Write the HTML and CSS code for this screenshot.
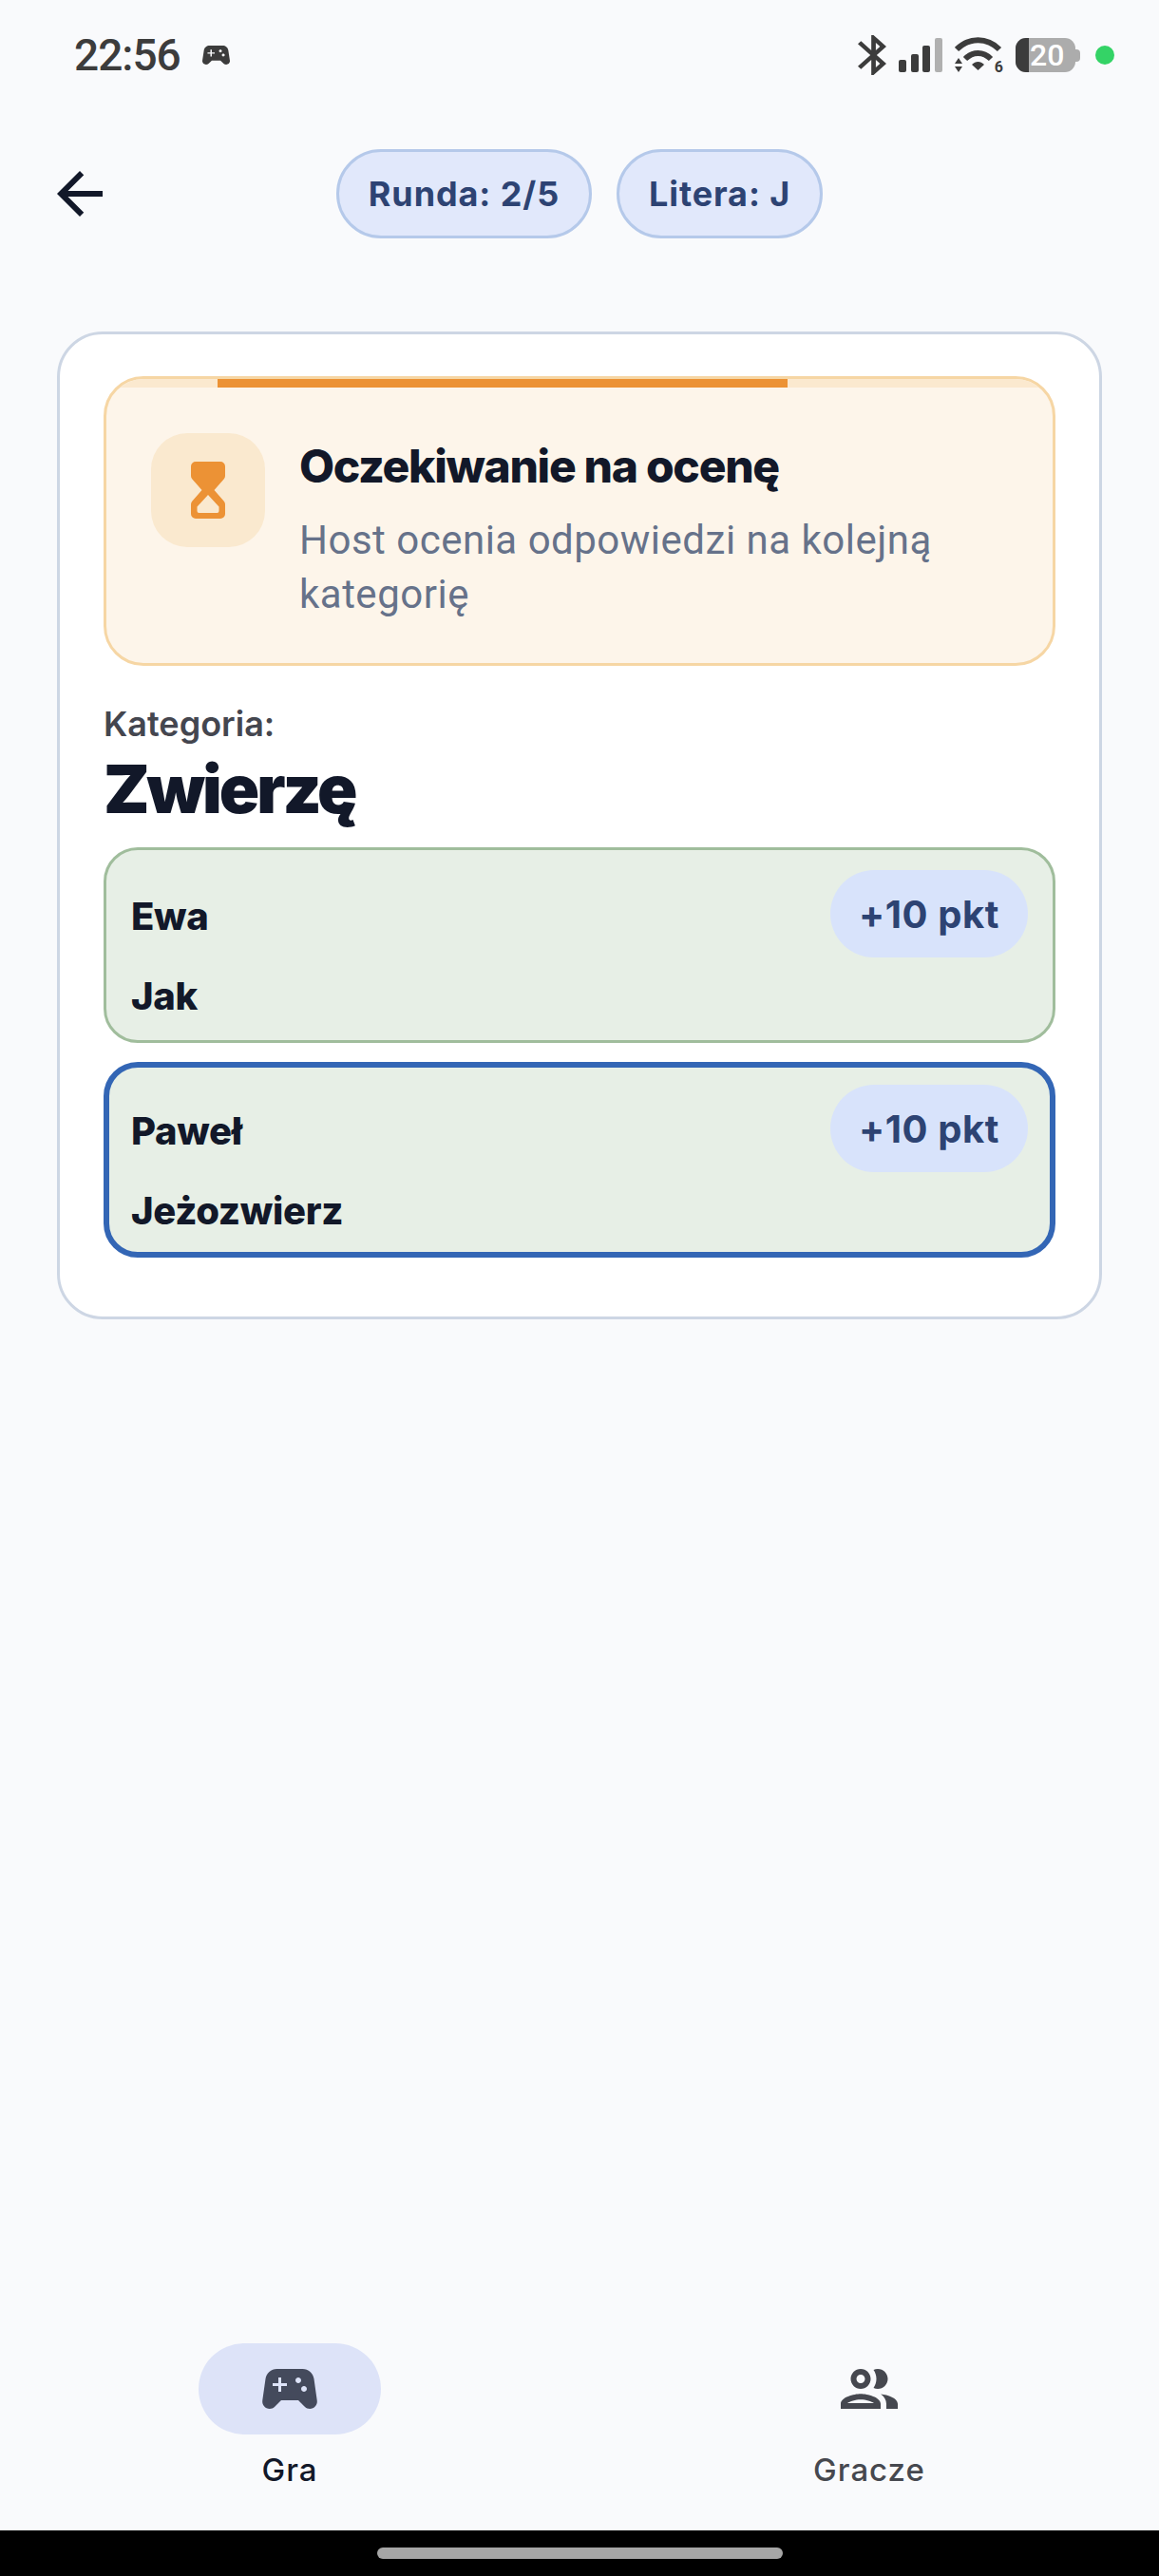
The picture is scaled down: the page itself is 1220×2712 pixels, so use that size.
FILE: index.html
```html
<!DOCTYPE html>
<html lang="pl">
<head>
  <meta charset="UTF-8" />
  <meta name="viewport" content="width=device-width, initial-scale=1.0"/>
  <title>Gra</title>
  <link rel="stylesheet" href="styles.css">
</head>
<body>
  <div class="statusBar">
    <div class="statusLeft">
      <span class="clock">22:56</span>
      <svg class="statusGame" viewBox="2.4 5 19.2 14" preserveAspectRatio="none"><path fill="#3c3c3c" d="M21.58 16.09l-1.09-7.66C20.21 6.46 18.52 5 16.53 5H7.47C5.48 5 3.79 6.46 3.51 8.43l-1.09 7.66C2.2 17.63 3.39 19 4.94 19c.68 0 1.32-.27 1.8-.75L9 16h6l2.25 2.25c.48.48 1.13.75 1.8.75 1.56 0 2.75-1.37 2.53-2.91zM11 11H9v2H8v-2H6v-1h2V8h1v2h2v1zm4-1c-.55 0-1-.45-1-1s.45-1 1-1 1 .45 1 1-.45 1-1 1zm2 3c-.55 0-1-.45-1-1s.45-1 1-1 1 .45 1 1-.45 1-1 1z"/></svg>
    </div>
    <div class="statusRight">
      <svg class="statusBt" viewBox="5 2 12.7 20" preserveAspectRatio="none"><path fill="#3c3c3c" d="M17.71 7.71L12 2h-1v7.59L6.41 5 5 6.41 10.59 12 5 17.59 6.41 19 11 14.41V22h1l5.71-5.71-4.3-4.29 4.3-4.29zM13 5.83l1.88 1.88L13 9.59V5.83zm1.88 10.46L13 18.17v-3.76l1.88 1.88z"/></svg>
      <svg class="statusSignal" viewBox="0 0 46 36">
        <rect x="0" y="23" width="8" height="13" rx="2" fill="#3c3c3c"/>
        <rect x="13" y="17" width="8" height="19" rx="2" fill="#3c3c3c"/>
        <rect x="25" y="8" width="8" height="28" rx="2" fill="#3c3c3c"/>
        <rect x="38" y="0" width="8" height="36" rx="2" fill="#b0b0b0"/>
      </svg>
      <div class="wifi">
        <svg viewBox="0 0 51 38">
          <path d="M2 13C15 0 34 0 47 13" fill="none" stroke="#3c3c3c" stroke-width="6"/>
          <path d="M11 23C19 15 30 15 38 23" fill="none" stroke="#3c3c3c" stroke-width="6"/>
          <path d="M18 29C22 25 27 25 31 29L24.500 35Z" fill="#3c3c3c"/>
          <path d="M4 22L8 28H0ZM4 37L0 31H8Z" fill="#3c3c3c"/>
        </svg>
        <span class="wifiGen">6</span>
      </div>
      <div class="battery">
        <div class="batteryBody">
          <div class="batteryLevel"></div>
          <span class="batteryText">20</span>
        </div>
        <div class="batteryNub"></div>
      </div>
      <div class="statusDot"></div>
    </div>
  </div>

  <div class="toolbar">
    <svg class="backIcon" viewBox="0 0 24 24"><path fill="#121829" d="M20 11H7.830l5.590-5.590L12 4l-8 8 8 8 1.410-1.410L7.830 13H20v-2z"/></svg>
    <div class="chips">
      <div class="chip">Runda: 2/5</div>
      <div class="chip">Litera: J</div>
    </div>
  </div>

  <main class="content">
    <div class="card">
      <div class="banner">
        <div class="progressTrack"><div class="progressFill"></div></div>
        <div class="bannerBody">
          <div class="bannerIcon">
            <svg viewBox="0 0 36 60"><path fill="#ec9235" fill-rule="evenodd" d="M5 0H31a5 5 0 0 1 5 5V15a5 5 0 0 1-1.200 3.200L24.500 30 34.800 41.800A5 5 0 0 1 36 45V55a5 5 0 0 1-5 5H5a5 5 0 0 1-5-5V45a5 5 0 0 1 1.200-3.200L11.500 30 1.200 18.200A5 5 0 0 1 0 15V5a5 5 0 0 1 5-5ZM18 35 6.500 47.500V52a2 2 0 0 0 2 2H27.500a2 2 0 0 0 2-2V47.500Z"/></svg>
          </div>
          <div class="bannerText">
            <div class="bannerTitle">Oczekiwanie na ocenę</div>
            <div class="bannerSub">Host ocenia odpowiedzi na kolejną kategorię</div>
          </div>
        </div>
      </div>

      <div class="catLabel">Kategoria:</div>
      <div class="catName">Zwierzę</div>

      <div class="answer">
        <div class="answerTop">
          <span class="answerText answerName">Ewa</span>
          <span class="points">+10 pkt</span>
        </div>
        <div class="answerText">Jak</div>
      </div>

      <div class="answer answerActive">
        <div class="answerTop">
          <span class="answerText answerName">Paweł</span>
          <span class="points">+10 pkt</span>
        </div>
        <div class="answerText">Jeżozwierz</div>
      </div>
    </div>
  </main>

  <nav class="bottomNav">
    <div class="navItem navItemActive">
      <div class="navPill">
        <svg viewBox="0 0 24 24"><path fill="#444a5c" d="M21.58 16.09l-1.09-7.66C20.21 6.46 18.52 5 16.53 5H7.47C5.48 5 3.79 6.46 3.51 8.43l-1.09 7.66C2.2 17.63 3.39 19 4.94 19c.68 0 1.32-.27 1.8-.75L9 16h6l2.25 2.25c.48.48 1.13.75 1.8.75 1.56 0 2.75-1.37 2.53-2.91zM11 11H9v2H8v-2H6v-1h2V8h1v2h2v1zm4-1c-.55 0-1-.45-1-1s.45-1 1-1 1 .45 1 1-.45 1-1 1zm2 3c-.55 0-1-.45-1-1s.45-1 1-1 1 .45 1 1-.45 1-1 1z"/></svg>
      </div>
      <div class="navLabel">Gra</div>
    </div>
    <div class="navItem">
      <div class="navPill">
        <svg viewBox="0 0 24 24"><path fill="#46484f" d="M9 13.75c-2.34 0-7 1.17-7 3.5V19h14v-1.75c0-2.33-4.66-3.5-7-3.5zM4.34 17c.84-.58 2.87-1.25 4.66-1.25s3.82.67 4.66 1.25H4.34zM9 12c1.93 0 3.5-1.57 3.5-3.5S10.93 5 9 5 5.5 6.57 5.5 8.5 7.07 12 9 12zm0-5c.83 0 1.5.67 1.5 1.5S9.83 10 9 10s-1.5-.67-1.5-1.5S8.17 7 9 7zm7.04 6.81c1.16.84 1.96 1.96 1.96 3.44V19h4v-1.75c0-2.02-3.5-3.17-5.96-3.44zM15 12c1.93 0 3.5-1.57 3.5-3.5S16.93 5 15 5c-.54 0-1.04.13-1.5.35.63.89 1 1.98 1 3.15s-.37 2.26-1 3.15c.46.22.96.35 1.5.35z"/></svg>
      </div>
      <div class="navLabel">Gracze</div>
    </div>
  </nav>

  <div class="gestureBar"><div class="gestureHandle"></div></div>
</body>
</html>
```

FILE: styles.css
```css
* {
  box-sizing: border-box;
}

body {
  margin: 0;
  height: 2712px;
  display: flex;
  flex-direction: column;
  background: #f9fafc;
  color: #121829;
  font-family: Inter, "Noto Sans", sans-serif;
}

/* Pasek statusu */
.statusBar {
  height: 116px;
  flex: none;
  display: flex;
  justify-content: space-between;
  align-items: center;
  padding: 0 47px 0 78px;
}

.statusLeft {
  display: flex;
  align-items: center;
  gap: 23px;
}

.clock {
  font-family: Roboto, sans-serif;
  font-size: 46px;
  font-weight: 500;
  color: #3c3c3c;
  letter-spacing: -1px;
}

.statusGame {
  width: 29px;
  height: 20px;
}

.statusRight {
  display: flex;
  align-items: center;
  gap: 13px;
}

.statusBt {
  width: 30px;
  height: 42px;
}

.statusSignal {
  width: 46px;
  height: 36px;
}

.wifi {
  position: relative;
  width: 51px;
  height: 38px;
}

.wifi svg {
  width: 51px;
  height: 38px;
  display: block;
}

.wifiGen {
  position: absolute;
  right: 0;
  bottom: -2px;
  font-family: Roboto, sans-serif;
  font-size: 16px;
  font-weight: 700;
  line-height: 16px;
  color: #3c3c3c;
}

.battery {
  display: flex;
  align-items: center;
}

.batteryBody {
  width: 63px;
  height: 36px;
  background: #acacac;
  border-radius: 11px;
  display: flex;
  align-items: center;
}

.batteryLevel {
  width: 14px;
  height: 36px;
  background: #3c3c3c;
  border-radius: 11px 0 0 11px;
}

.batteryText {
  font-family: Roboto, sans-serif;
  font-size: 32px;
  font-weight: 500;
  line-height: 32px;
  color: #fff;
  margin-left: 1px;
}

.batteryNub {
  width: 5px;
  height: 13px;
  background: #acacac;
  border-radius: 0 4px 4px 0;
}

.statusDot {
  width: 20px;
  height: 20px;
  margin-left: 3px;
  border-radius: 50%;
  background: #34d366;
}

/* Gorny pasek */
.toolbar {
  flex: none;
  display: grid;
  grid-template-columns: 1fr auto 1fr;
  align-items: center;
  padding: 41px 48px 0;
}

.backIcon {
  width: 72px;
  height: 72px;
}

.chips {
  display: flex;
  gap: 26px;
}

.chip {
  height: 94px;
  display: flex;
  align-items: center;
  padding: 0 31px;
  background: #e1e8fb;
  border: 3px solid #b5c9ea;
  border-radius: 47px;
  font-size: 36px;
  font-weight: 700;
  letter-spacing: 0.9px;
  color: #2d4373;
}

.content {
  flex: 1;
  padding: 98px 60px 0;
}

.card {
  background: #fff;
  border: 3px solid #cdd6e4;
  border-radius: 48px;
  padding: 44px 46px 62px;
}

/* Baner oczekiwania */
.banner {
  height: 305px;
  background: #fdf5ea;
  border: 3px solid #f6d6a4;
  border-radius: 42px;
  overflow: hidden;
}

.progressTrack {
  height: 9px;
  background: #fbe9cf;
}

.progressFill {
  width: 600px;
  height: 100%;
  margin-left: 117px;
  background: #ec9235;
}

.bannerBody {
  display: flex;
  align-items: flex-start;
  gap: 36px;
  padding: 48px 47px 0;
}

.bannerIcon {
  width: 120px;
  height: 120px;
  flex: none;
  display: flex;
  align-items: center;
  justify-content: center;
  background: #fae9cf;
  border-radius: 38px;
}

.bannerIcon svg {
  width: 36px;
  height: 60px;
}

.bannerText {
  padding-top: 5px;
}

.bannerTitle {
  font-size: 48px;
  font-weight: 800;
  line-height: 60px;
  letter-spacing: -1.3px;
  color: #121829;
}

.bannerSub {
  margin-top: 19px;
  font-family: Roboto, sans-serif;
  font-size: 42px;
  line-height: 57px;
  letter-spacing: 0.5px;
  color: #66728a;
}

.catLabel {
  margin-top: 36px;
  font-size: 36px;
  font-weight: 600;
  line-height: 50px;
  color: #44464f;
}

.catName {
  font-size: 70px;
  font-weight: 900;
  line-height: 88px;
  letter-spacing: -3px;
  color: #121829;
}

/* Odpowiedzi */
.answer {
  height: 206px;
  margin-top: 17px;
  padding: 21px 26px;
  background: #e7efe6;
  border: 3px solid #a0bd9c;
  border-radius: 36px;
}

.answerActive {
  margin-top: 20px;
  padding: 18px 23px;
  border: 6px solid #3366b5;
}

.answerTop {
  display: flex;
  justify-content: space-between;
  align-items: center;
  margin-bottom: 13px;
}

.answerText {
  font-size: 40px;
  font-weight: 800;
  line-height: 56px;
  letter-spacing: -0.3px;
  color: #121829;
}

.answerName {
  margin-top: 6px;
}

.points {
  height: 92px;
  display: flex;
  align-items: center;
  padding: 0 30px;
  background: #d8e3fb;
  border-radius: 46px;
  font-size: 40px;
  font-weight: 700;
  letter-spacing: 0.6px;
  color: #2d4373;
}

/* Dolna nawigacja */
.bottomNav {
  flex: none;
  height: 197px;
  display: grid;
  grid-template-columns: 1fr 1fr;
}

.navItem {
  display: flex;
  flex-direction: column;
  align-items: center;
}

.navPill {
  width: 192px;
  height: 96px;
  display: flex;
  align-items: center;
  justify-content: center;
  border-radius: 48px;
}

.navPill svg {
  width: 72px;
  height: 72px;
}

.navItemActive .navPill {
  background: #dde3f8;
}

.navLabel {
  margin-top: 15px;
  font-size: 33px;
  font-weight: 500;
  line-height: 44px;
  letter-spacing: 1px;
  color: #46484f;
}

.navItemActive .navLabel {
  color: #121829;
}

.gestureBar {
  flex: none;
  height: 48px;
  display: flex;
  justify-content: center;
  align-items: center;
  background: #000;
}

.gestureHandle {
  width: 427px;
  height: 12px;
  border-radius: 6px;
  background: #a6a6a6;
}
```
